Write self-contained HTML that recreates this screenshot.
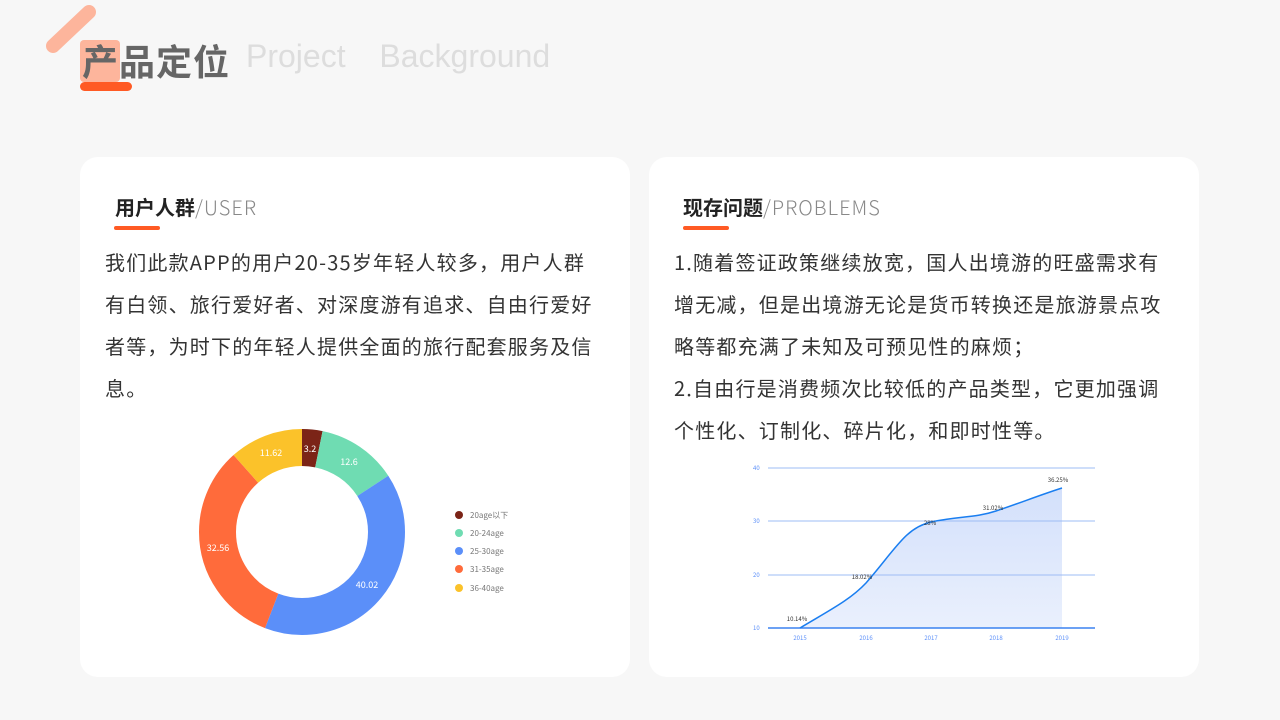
<!DOCTYPE html><html><head><meta charset="utf-8"><style>
body{margin:0;width:1280px;height:720px;background:#f7f7f7;font-family:"Noto Sans CJK SC","Liberation Sans",sans-serif;position:relative;overflow:hidden}
.card{position:absolute;top:157px;width:550px;height:520px;background:#fff;border-radius:18px}
.h{position:absolute;top:192px;font-size:20px;color:#222;font-weight:bold;line-height:30px}
.h span{font-weight:300;color:#888;letter-spacing:1px}
.ul{position:absolute;top:226px;width:46px;height:4px;border-radius:2px;background:#ff5a24}
.t{position:absolute;font-size:20px;line-height:42px;color:#333;white-space:nowrap;letter-spacing:1.2px}
</style></head><body>
<div style="position:absolute;left:40px;top:0px;width:70px;height:70px">
<svg width="70" height="70"><line x1="13" y1="46" x2="49" y2="12" stroke="#fdb59c" stroke-width="14" stroke-linecap="round"/></svg></div>
<div style="position:absolute;left:80px;top:40px;width:40px;height:42px;background:#fdb59c;border-radius:4px"></div>
<div style="position:absolute;left:80px;top:82px;width:52px;height:9px;background:#ff5a24;border-radius:5px"></div>
<div style="position:absolute;left:82px;top:34px;font-size:36px;line-height:52px;font-weight:bold;color:#666;letter-spacing:1px">产品定位</div>
<div style="position:absolute;left:246px;top:38px;font-family:'Liberation Sans',sans-serif;font-size:32px;color:#ddd;word-spacing:8px">Project&nbsp; Background</div>

<div class="card" style="left:80px"></div>
<div class="card" style="left:649px"></div>
<div class="h" style="left:115px">用户人群<span>/USER</span></div>
<div class="ul" style="left:114px"></div>
<div class="h" style="left:683px">现存问题<span>/PROBLEMS</span></div>
<div class="ul" style="left:683px"></div>
<div class="t" style="left:105px;top:241px">我们此款APP的用户20-35岁年轻人较多，用户人群<br>有白领、旅行爱好者、对深度游有追求、自由行爱好<br>者等，为时下的年轻人提供全面的旅行配套服务及信<br>息。</div>
<div class="t" style="left:674px;top:241px">1.随着签证政策继续放宽，国人出境游的旺盛需求有<br>增无减，但是出境游无论是货币转换还是旅游景点攻<br>略等都充满了未知及可预见性的麻烦；<br>2.自由行是消费频次比较低的产品类型，它更加强调<br>个性化、订制化、碎片化，和即时性等。</div>

<svg style="position:absolute;left:0;top:0" width="640" height="720">
<g transform="rotate(-90 302 532)" fill="none" stroke-width="37">
<circle cx="302" cy="532" r="84.5" stroke="#7b2417" stroke-dasharray="17 600" stroke-dashoffset="0"/>
<circle cx="302" cy="532" r="84.5" stroke="#6fdcb2" stroke-dasharray="66.9 600" stroke-dashoffset="-17"/>
<circle cx="302" cy="532" r="84.5" stroke="#5b8ff9" stroke-dasharray="212.5 600" stroke-dashoffset="-83.9"/>
<circle cx="302" cy="532" r="84.5" stroke="#ff6b3b" stroke-dasharray="172.9 600" stroke-dashoffset="-296.4"/>
<circle cx="302" cy="532" r="84.5" stroke="#fbc22a" stroke-dasharray="61.7 600" stroke-dashoffset="-469.3"/>
</g>
<g font-size="9" fill="#fff" text-anchor="middle">
<text x="310" y="452">3.2</text><text x="349" y="465">12.6</text><text x="367" y="588">40.02</text><text x="218" y="551">32.56</text><text x="271" y="456">11.62</text></g>
<g font-size="8" fill="#777">
<circle cx="459" cy="515" r="4" fill="#7b2417"/><text x="470" y="518">20age以下</text>
<circle cx="459" cy="533" r="4" fill="#6fdcb2"/><text x="470" y="536">20-24age</text>
<circle cx="459" cy="551" r="4" fill="#5b8ff9"/><text x="470" y="554">25-30age</text>
<circle cx="459" cy="569" r="4" fill="#ff6b3b"/><text x="470" y="572">31-35age</text>
<circle cx="459" cy="588" r="4" fill="#fbc22a"/><text x="470" y="591">36-40age</text></g>
</svg>
<svg style="position:absolute;left:0;top:0" width="1280" height="720">
<defs><linearGradient id="g" x1="0" y1="0" x2="0" y2="1"><stop offset="0" stop-color="#d3e0fb"/><stop offset="1" stop-color="#eaf0fd"/></linearGradient></defs>
<path d="M800 628 C830 610 850 600 866 583 C895 550 905 528 931 522 C960 516 975 518 996 511 C1020 503 1040 495 1062 488 L1062 628 Z" fill="url(#g)"/>
<g stroke="#9ebcf5" stroke-width="1"><line x1="768" y1="468" x2="1095" y2="468"/><line x1="768" y1="521" x2="1095" y2="521"/><line x1="768" y1="575" x2="1095" y2="575"/></g>
<line x1="768" y1="628" x2="1095" y2="628" stroke="#3b82f0" stroke-width="1.5"/>
<path d="M800 628 C830 610 850 600 866 583 C895 550 905 528 931 522 C960 516 975 518 996 511 C1020 503 1040 495 1062 488" fill="none" stroke="#1a7ef0" stroke-width="1.5"/>
<g font-size="6" fill="#5b8ff9"><text x="753" y="470">40</text><text x="753" y="523">30</text><text x="753" y="577">20</text><text x="753" y="630">10</text>
<g text-anchor="middle"><text x="800" y="640">2015</text><text x="866" y="640">2016</text><text x="931" y="640">2017</text><text x="996" y="640">2018</text><text x="1062" y="640">2019</text></g></g>
<g font-size="6" fill="#333" text-anchor="middle"><text x="797" y="621">10.14%</text><text x="862" y="579">18.02%</text><text x="930" y="525">28%</text><text x="993" y="510">31.02%</text><text x="1058" y="482">36.25%</text></g>
</svg>
</body></html>
